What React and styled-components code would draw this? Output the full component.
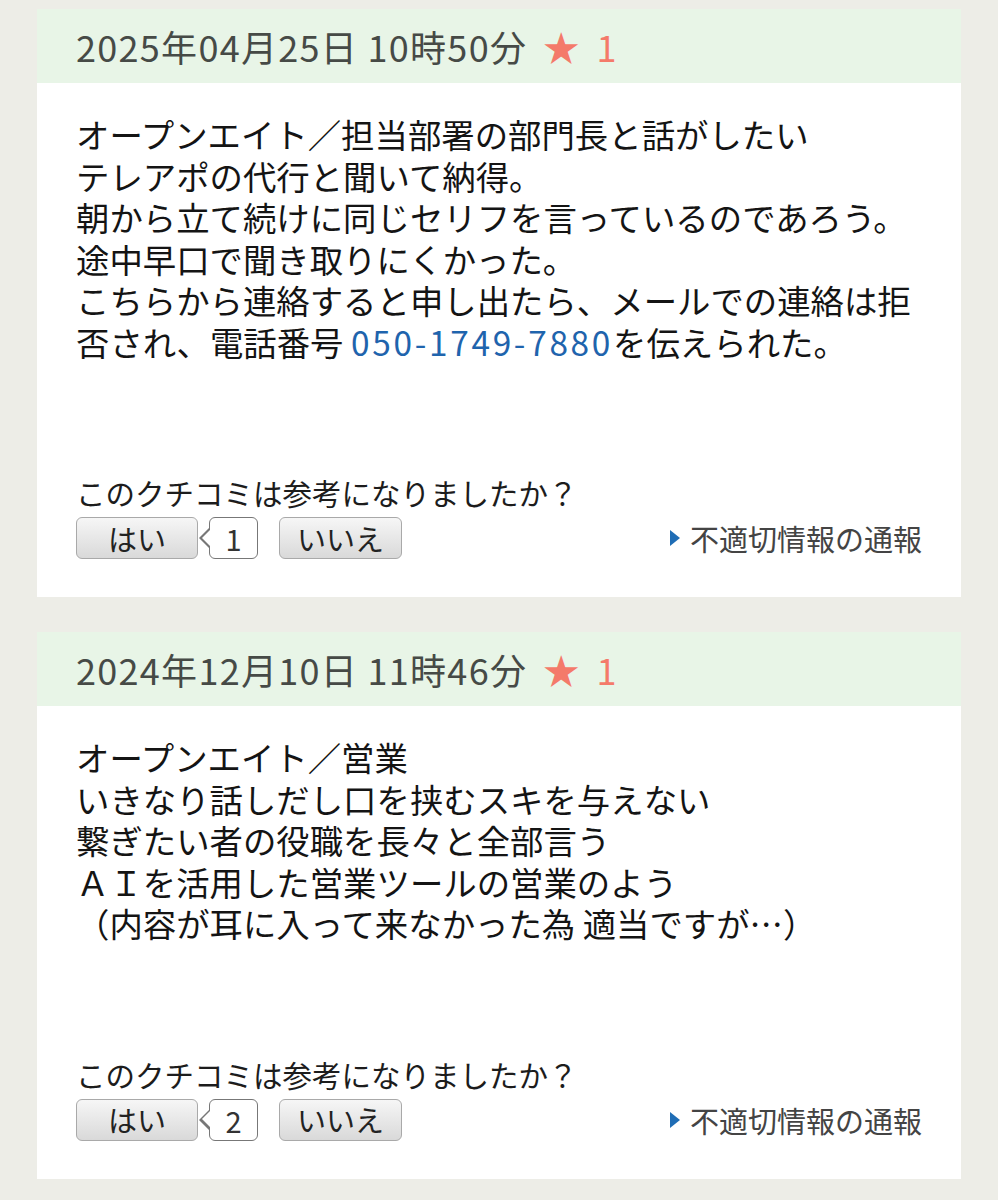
import React from 'react';
import styled, { createGlobalStyle } from 'styled-components';

const GlobalStyle = createGlobalStyle`
  body {
    margin: 0;
    background: #edede7;
    font-family: "Noto Sans CJK JP", "Noto Sans", sans-serif;
  }
`;

// 전체 레이아웃
const Page = styled.div`
  padding: 9px 37px 20px;
  display: flex;
  flex-direction: column;
  gap: 35px;
`;

const Card = styled.section`
  background: #fff;
`;

const CardHeader = styled.div`
  height: 74px;
  display: flex;
  align-items: center;
  padding: 0 39px;
  background: #e8f5e7;
  color: #464a46;
  font-size: 36px;
  letter-spacing: 1.3px;
`;

const Rating = styled.span`
  color: #f47a6a;
  margin-left: 16px;
  display: inline-flex;
  align-items: center;
  gap: 16px;
`;

const Body = styled.div`
  padding: 30px 39px 38px;
`;

const ReviewText = styled.div`
  margin: 0 0 112px;
  font-size: 33.4px;
  line-height: 41.5px;
  color: #141414;
  white-space: pre-line;
`;

const Phone = styled.a`
  color: #1f64ad;
  text-decoration: none;
  letter-spacing: 2.7px;
`;

const Question = styled.p`
  margin: 0 0 7px;
  font-size: 29.5px;
  line-height: 36px;
  color: #1c1c1c;
`;

const Actions = styled.div`
  display: flex;
  align-items: center;
`;

const VoteButton = styled.button`
  width: ${(p) => p.$width}px;
  height: 42px;
  padding: 0;
  border: 1px solid #a9a9a9;
  border-radius: 6px;
  background: linear-gradient(#f6f6f6, #d9d9d9);
  font-family: inherit;
  font-size: 29px;
  color: #222;
  line-height: 1;
`;

const CountBubble = styled.span`
  position: relative;
  margin: 0 21px 0 11px;
  width: 47px;
  height: 40px;
  border: 1.5px solid #777;
  border-radius: 6px;
  background: #fff;
  display: flex;
  align-items: center;
  justify-content: center;
  font-size: 29px;
  color: #333;

  &::before,
  &::after {
    content: '';
    position: absolute;
    top: 50%;
    width: 0;
    height: 0;
    border-style: solid;
  }
  &::before {
    left: -11px;
    margin-top: -11px;
    border-width: 11px 11px 11px 0;
    border-color: transparent #777 transparent transparent;
  }
  &::after {
    left: -8.5px;
    margin-top: -9.5px;
    border-width: 9.5px 9.5px 9.5px 0;
    border-color: transparent #fff transparent transparent;
  }
`;

const ReportLink = styled.a`
  margin-left: auto;
  display: flex;
  align-items: center;
  gap: 10px;
  font-size: 29px;
  color: #444;
  text-decoration: none;
`;

const Arrow = styled.span`
  width: 0;
  height: 0;
  border-style: solid;
  border-width: 8px 0 8px 10px;
  border-color: transparent transparent transparent #1f6db5;
`;

const reviews = [
  {
    date: '2025年04月25日 10時50分',
    stars: 1,
    helpful: 1,
    text: (
      <>
        {'オープンエイト／担当部署の部門長と話がしたい\nテレアポの代行と聞いて納得。\n朝から立て続けに同じセリフを言っているのであろう。\n途中早口で聞き取りにくかった。\nこちらから連絡すると申し出たら、メールでの連絡は拒\n'}
        <span>否され、電話番号 </span>
        <Phone href="#">050-1749-7880</Phone>
        <span>を伝えられた。</span>
      </>
    ),
  },
  {
    date: '2024年12月10日 11時46分',
    stars: 1,
    helpful: 2,
    text: 'オープンエイト／営業\nいきなり話しだし口を挟むスキを与えない\n繋ぎたい者の役職を長々と全部言う\nＡＩを活用した営業ツールの営業のよう\n（内容が耳に入って来なかった為 適当ですが…）',
  },
];

function Review({ review }) {
  return (
    <Card>
      <CardHeader>
        {review.date}
        <Rating>
          <span>★</span>
          <span>{review.stars}</span>
        </Rating>
      </CardHeader>
      <Body>
        <ReviewText>{review.text}</ReviewText>
        <Question>このクチコミは参考になりましたか？</Question>
        <Actions>
          <VoteButton $width={122}>はい</VoteButton>
          <CountBubble>{review.helpful}</CountBubble>
          <VoteButton $width={123}>いいえ</VoteButton>
          <ReportLink href="#">
            <Arrow />
            不適切情報の通報
          </ReportLink>
        </Actions>
      </Body>
    </Card>
  );
}

export default function App() {
  return (
    <>
      <GlobalStyle />
      <Page>
        {reviews.map((r) => (
          <Review key={r.date} review={r} />
        ))}
      </Page>
    </>
  );
}
